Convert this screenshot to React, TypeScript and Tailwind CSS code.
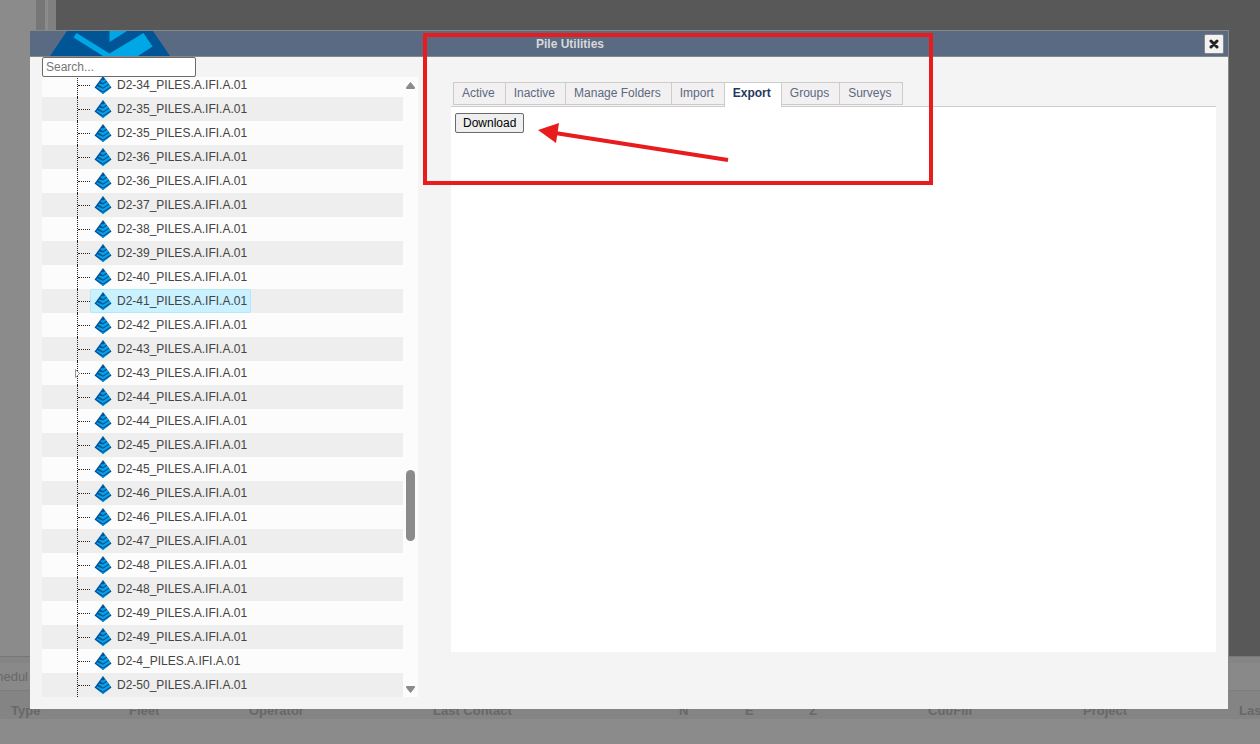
import { useState } from "react";

const piles = [
  "D2-34", "D2-35", "D2-35", "D2-36", "D2-36", "D2-37", "D2-38", "D2-39", "D2-40",
  "D2-41", "D2-42", "D2-43", "D2-43", "D2-44", "D2-44", "D2-45", "D2-45", "D2-46",
  "D2-46", "D2-47", "D2-48", "D2-48", "D2-49", "D2-49", "D2-4", "D2-50",
];

const tabs = ["Active", "Inactive", "Manage Folders", "Import", "Export", "Groups", "Surveys"];

const columns = [
  { label: "Type", width: "w-[118px]" },
  { label: "Fleet", width: "w-[120px]" },
  { label: "Operator", width: "w-[184px]" },
  { label: "Last Contact", width: "w-[246px]" },
  { label: "N", width: "w-[66px]" },
  { label: "E", width: "w-[64px]" },
  { label: "Z", width: "w-[119px]" },
  { label: "Cut/Fill", width: "w-[155px]" },
  { label: "Project", width: "w-[156px]" },
  { label: "Las", width: "w-[120px]" },
];

function PileIcon() {
  return (
    <svg viewBox="0 0 18 18" className="h-[18px] w-[18px] shrink-0" aria-hidden="true">
      <path d="M9 0 L17.5 11.5 L9 18 L0.5 11.5 Z" fill="#00569a" />
      <path
        d="M9 4.6 L11.2 3 L12.4 4.6 L9 7 L6.4 5.2 L7 4.2 Z M9 8.6 L13.2 5.8 L14.6 7.8 L9 11.4 L4.4 8.4 L5 7.5 Z M9 12.8 L15.3 8.8 L16.6 10.6 L9 15.4 L2.4 11.2 L3 10.2 Z M9 16.8 L16.6 12 L9 17.9 L3.6 13.8 Z"
        fill="#0aa0e2"
      />
    </svg>
  );
}

function Logo() {
  return (
    <svg viewBox="0 0 120 25" className="h-[25px] w-[120px]" aria-hidden="true">
      <path d="M17 0 H103 L120 25 H0 Z" fill="#005596" />
      <path d="M59.5 0 H77 L59.5 11 Z" fill="#00a7e7" />
      <path d="M26.5 2 L23.5 6.5 L53 25 H88 L102.5 15.5 L93.5 2 L59.5 22.5 Z" fill="#00a7e7" />
    </svg>
  );
}

function Backdrop() {
  return (
    <div className="flex h-screen flex-col overflow-hidden bg-[#8b8b8b] text-[13px] text-[#686868]">
      <div className="flex flex-1">
        <div className="w-9 bg-[#8b8b8b]" />
        <div className="w-[9px] bg-[#767676]" />
        <div className="w-[3px] bg-[#8b8b8b]" />
        <div className="w-2 bg-[#808080]" />
        <div className="flex-1 bg-[#585858]" />
      </div>
      <div className="h-[7px] border-t border-[#777777] bg-[#858585]" />
      <div className="flex h-7 items-center border-b border-[#7d7d7d] bg-[#898989]">
        <span className="flex w-7 justify-end overflow-hidden">Schedul</span>
      </div>
      <div className="h-7 overflow-hidden bg-[#848484] pl-[11px]">
        <table className="w-[1348px] table-fixed">
          <thead>
            <tr className="h-10 text-left">
              {columns.map((column) => (
                <th key={column.label} className={column.width}>
                  {column.label}
                </th>
              ))}
            </tr>
          </thead>
        </table>
      </div>
      <div className="h-[25px]" />
    </div>
  );
}

function PileTree() {
  const [selected, setSelected] = useState(9);

  return (
    <div className="flex h-[620px] w-[376px] overflow-hidden bg-[#fcfcfc]">
      <ul className="-mt-1 flex-1">
        {piles.map((pile, index) => (
          <li key={index} className="flex h-6 items-center pl-[35px] odd:bg-[#fcfcfc] even:bg-[#eeeeee]">
            <span className="relative flex h-6 w-[13px] items-center border-l border-dotted border-[#222222]">
              <span className="w-full border-t border-dotted border-[#222222]" />
              {index === 12 && (
                <svg viewBox="0 0 5 9" className="absolute -left-[3px] h-[9px] w-[5px]" aria-hidden="true">
                  <path d="M0.5 0.5 L4.5 4.5 L0.5 8.5 Z" fill="#fcfcfc" stroke="#999999" />
                </svg>
              )}
            </span>
            <button
              onClick={() => setSelected(index)}
              className={
                index === selected
                  ? "flex h-6 items-center gap-[5px] rounded-xs border border-[#b5e8f5] bg-[#c9f1ff] pr-[3px] pl-[3px] text-[#444444]"
                  : "flex h-6 items-center gap-[5px] rounded-xs border border-transparent pr-[3px] pl-[3px] text-[#444444]"
              }
            >
              <PileIcon />
              {pile}_PILES.A.IFI.A.01
            </button>
          </li>
        ))}
      </ul>
      <div className="flex w-[15px] flex-col items-center pt-[5px] pb-[3px]">
        <svg viewBox="0 0 9 8" className="h-2 w-[9px]" aria-hidden="true">
          <path d="M4.5 0.5 L8.5 5.5 V6.5 H0.5 V5.5 Z" fill="#8b8b8b" stroke="#8b8b8b" strokeLinejoin="round" />
        </svg>
        <div className="flex-[380]" />
        <div className="h-[71px] w-[9px] rounded-full bg-[#8b8b8b]" />
        <div className="flex-[145]" />
        <svg viewBox="0 0 9 8" className="h-2 w-[9px]" aria-hidden="true">
          <path d="M4.5 6.5 L8.5 1.5 V0.5 H0.5 V1.5 Z" fill="#8b8b8b" stroke="#8b8b8b" strokeLinejoin="round" />
        </svg>
      </div>
    </div>
  );
}

export default function App() {
  const [activeTab, setActiveTab] = useState("Export");

  return (
    <div className="relative font-['Liberation_Sans',Arial,sans-serif] text-xs">
      <Backdrop />

      <div className="absolute inset-x-0 top-0 pt-[30px] pr-[31px] pl-[30px]">
        <div role="dialog" aria-labelledby="dialog-title" className="border-t border-r border-[#888888] bg-[#f4f4f4]">
          <header className="flex h-[26px] items-center border-b border-[#888888] bg-[#5a6a82] pr-1 pl-5">
            <Logo />
            <h1 id="dialog-title" className="flex-1 pl-[366px] font-bold text-[#d8d8d8]">
              Pile Utilities
            </h1>
            <button
              aria-label="Close"
              className="flex h-5 w-5 items-center justify-center rounded-xs border border-[#888888] bg-[#f2f2f2]"
            >
              <svg viewBox="0 0 10 10" className="h-[10px] w-[10px]" aria-hidden="true">
                <path d="M2 2 L8 8 M8 2 L2 8" stroke="#222222" strokeWidth="3" strokeLinecap="round" />
              </svg>
            </button>
          </header>

          <div className="flex gap-[33px] pr-3 pb-3 pl-3">
            <div>
              <input
                type="text"
                aria-label="Search"
                placeholder="Search..."
                className="block h-5 w-[154px] rounded-xs border border-[#6b6b6b] bg-white px-[3px] placeholder:text-[#757575]"
              />
              <PileTree />
            </div>

            <div className="flex-1 pt-[25px]">
              <div role="tablist" className="flex h-[25px] border-b border-[#cccccc] pl-0.5">
                {tabs.map((tab) => (
                  <button
                    key={tab}
                    role="tab"
                    aria-selected={tab === activeTab}
                    onClick={() => setActiveTab(tab)}
                    className={
                      tab === activeTab
                        ? "-ml-px h-[25px] border border-b-0 border-[#cccccc] bg-white pr-[10px] pb-1 pl-2 font-bold text-[#1f3864] first:ml-0"
                        : "-ml-px h-[23px] border border-[#cccccc] bg-[#f2f0f0] pr-[10px] pb-0.5 pl-2 text-[#5a6a82] first:ml-0"
                    }
                  >
                    {tab}
                  </button>
                ))}
              </div>
              <div role="tabpanel" className="h-[545px] bg-white px-1 py-1.5">
                <button className="h-5 rounded-xs border border-[#6b6b6b] bg-[#efefef] px-[7px] text-black">
                  Download
                </button>
              </div>
            </div>
          </div>
        </div>
      </div>

      <div className="pointer-events-none absolute top-[33px] left-[423px] h-[152px] w-[510px] border-4 border-[#e81c1c]">
        <svg viewBox="0 0 192 40" className="absolute top-[86px] left-[111px] h-10 w-48" aria-hidden="true">
          <path d="M0 7 L21 0 L18 20 Z" fill="#e81c1c" />
          <path d="M17 10 L190 37" stroke="#e81c1c" strokeWidth="4" />
        </svg>
      </div>
    </div>
  );
}
